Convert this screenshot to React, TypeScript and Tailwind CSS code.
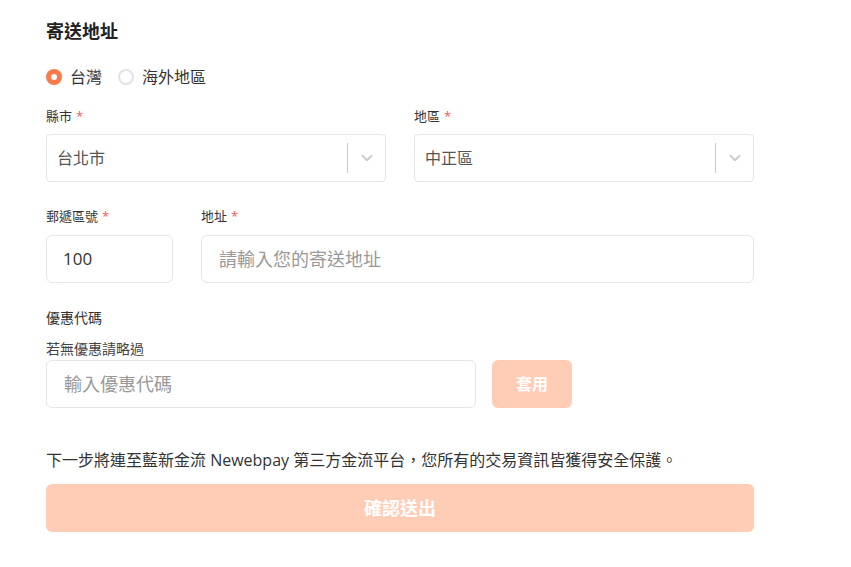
import { ChevronDown } from 'lucide-react';

const font = { fontFamily: '"Open Sans", "Noto Sans CJK TC", sans-serif' };

function Label({ text, required }: { text: string; required?: boolean }) {
  return (
    <div className="text-[13px] leading-[18px] text-[#333]">
      {text}
      {required && <span className="ml-1 text-[#f05a5a]">*</span>}
    </div>
  );
}

function Select({ value }: { value: string }) {
  return (
    <div className="flex h-12 items-center rounded border border-[#e2e5ec] bg-white">
      <div className="flex-1 pl-[10px] text-[16px] text-[#555]">{value}</div>
      <div className="h-[30px] w-px bg-[#cccccc]" />
      <div className="flex w-[37px] items-center justify-center text-[#cccccc]">
        <ChevronDown size={18} strokeWidth={2.5} />
      </div>
    </div>
  );
}

export default function App() {
  return (
    <div className="min-h-screen bg-white" style={font}>
      <div className="w-[708px] ml-[46px] pt-[18px]">
        <h2 className="text-[18px] leading-[26px] font-bold text-[#222]">寄送地址</h2>

        {/* region radios */}
        <div className="mt-[21px] flex h-6 items-center text-[16px] text-[#333]">
          <span className="flex h-4 w-4 items-center justify-center rounded-full bg-[#fb7a4c]">
            <span className="h-[6px] w-[6px] rounded-full bg-white" />
          </span>
          <span className="ml-2">台灣</span>
          <span className="ml-4 h-4 w-4 rounded-full border-2 border-[#e1e2e6]" />
          <span className="ml-2">海外地區</span>
        </div>

        <div className="mt-[18px] grid grid-cols-2 gap-7">
          <div>
            <Label text="縣市" required />
            <div className="mt-[9px]">
              <Select value="台北市" />
            </div>
          </div>
          <div>
            <Label text="地區" required />
            <div className="mt-[9px]">
              <Select value="中正區" />
            </div>
          </div>
        </div>

        <div className="mt-[25px] flex gap-7">
          <div className="w-[127px]">
            <Label text="郵遞區號" required />
            <div className="mt-[10px] flex h-12 items-center rounded-md border border-[#e2e5ec] px-4 text-[17px] text-[#333]">
              100
            </div>
          </div>
          <div className="flex-1">
            <Label text="地址" required />
            <div className="mt-[10px] flex h-12 items-center rounded-md border border-[#e2e5ec] px-[17px] text-[18px] text-[#999]">
              請輸入您的寄送地址
            </div>
          </div>
        </div>

        <div className="mt-[26px]">
          <div className="text-[14px] leading-[18px] text-[#333]">優惠代碼</div>
          <div className="mt-[13px] text-[14px] leading-[18px] text-[#444]">若無優惠請略過</div>
          <div className="mt-[2px] flex gap-4">
            <div className="flex h-12 w-[430px] items-center rounded-md border border-[#e2e5ec] px-[17px] text-[18px] text-[#999]">
              輸入優惠代碼
            </div>
            <button className="h-12 w-20 rounded-md bg-[#ffccb5] text-[16px] font-bold text-white">套用</button>
          </div>
        </div>

        <p className="mt-[40px] text-[16px] leading-[24px] text-[#333]">
          下一步將連至藍新金流 Newebpay 第三方金流平台，您所有的交易資訊皆獲得安全保護。
        </p>
        <button className="mt-[12px] h-12 w-full rounded-md bg-[#ffccb5] text-[18px] font-bold text-white">
          確認送出
        </button>
      </div>
    </div>
  );
}
